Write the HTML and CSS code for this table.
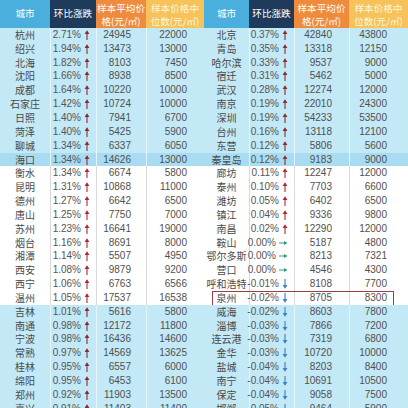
FILE: index.html
```html
<!DOCTYPE html>
<html lang="zh">
<head>
<meta charset="utf-8">
<link rel="stylesheet" href="styles.css">
</head>
<body>
<div class="page">
  <div class="tbl tl" id="left"></div>
  <div class="tbl tr" id="right"></div>
</div>
<script src="app.js"></script>
</body>
</html>
```
FILE: app.js
```js
var L = [
["杭州","2.71%","24945","22000"],["绍兴","1.94%","13473","13000"],["北海","1.82%","8103","7450"],
["沈阳","1.66%","8938","8500"],["成都","1.64%","10220","10000"],["石家庄","1.42%","10724","10000"],
["日照","1.40%","7941","6700"],["菏泽","1.40%","5425","5900"],["聊城","1.34%","6337","6050"],
["海口","1.34%","14626","13000"],["衡水","1.34%","6674","5800"],["昆明","1.31%","10868","11000"],
["德州","1.27%","6642","6500"],["唐山","1.25%","7750","7000"],["苏州","1.23%","16641","19000"],
["烟台","1.16%","8691","8000"],["湘潭","1.14%","5507","4950"],["西安","1.08%","9879","9200"],
["西宁","1.06%","6763","6566"],["温州","1.05%","17537","16538"],["吉林","1.01%","5616","5800"],
["南通","0.98%","12172","11800"],["宁波","0.98%","16436","14600"],["常熟","0.97%","14569","13625"],
["桂林","0.95%","6557","6000"],["绵阳","0.95%","6453","6100"],["郑州","0.92%","11903","13500"],
["嘉兴","0.91%","11403","11400"]];
var R = [
["北京","0.37%","42840","43800"],["青岛","0.35%","13318","12150"],["哈尔滨","0.33%","9537","9000"],
["宿迁","0.31%","5462","5000"],["武汉","0.28%","12274","12000"],["南京","0.19%","22010","24300"],
["深圳","0.19%","54233","53500"],["台州","0.16%","13118","12100"],["东营","0.12%","5806","5600"],
["秦皇岛","0.12%","9183","9000"],["廊坊","0.11%","12247","12000"],["泰州","0.10%","7703","6600"],
["潍坊","0.05%","6402","6500"],["镇江","0.04%","9336","9800"],["南昌","0.02%","12290","12000"],
["鞍山","0.00%","5187","4800"],["鄂尔多斯","0.00%","8213","7321"],["营口","0.00%","4546","4300"],
["呼和浩特","-0.01%","8108","7700"],["泉州","-0.02%","8705","8300"],["威海","-0.02%","8603","7800"],
["淄博","-0.03%","7866","7200"],["连云港","-0.03%","7319","6800"],["金华","-0.03%","10720","10000"],
["盐城","-0.04%","8203","8400"],["南宁","-0.04%","10691","10500"],["保定","-0.04%","9058","7500"],
["邯郸","-0.05%","9464","5900"]];

var UP = '<svg class="ar up" viewBox="0 0 6 10" width="6" height="10"><path d="M3 10V2.5" stroke="currentColor" stroke-width="1.1"/><path d="M0.6 4L3 0.3L5.4 4Z" fill="currentColor"/></svg>';
var DN = '<svg class="ar dn" viewBox="0 0 6 10" width="6" height="10"><path d="M3 0V7.5" stroke="currentColor" stroke-width="1.1"/><path d="M0.6 6L3 9.7L5.4 6Z" fill="currentColor"/></svg>';
var EQ = '<svg class="ar eq" viewBox="0 0 9 6" width="9" height="6"><path d="M0 3H6" stroke="currentColor" stroke-width="1"/><path d="M5 1L8.6 3L5 5Z" fill="currentColor"/></svg>';

function build(el, data, marked) {
  var h = '<div class="row head"><div class="c h1">城市</div><div class="c h2">环比涨跌</div>' +
    '<div class="c h3"><span class="hx"><span class="ln">样本平均价</span><span class="ln">格(元/㎡)</span></span></div>' +
    '<div class="c h4"><span class="hx"><span class="ln">样本价格中</span><span class="ln">位数(元/㎡)</span></span></div></div>';
  data.forEach(function (r, i) {
    var band = (i < 10 || i >= 20) ? 'blue' : 'white';
    if (i === 9) band += ' hl';
    if (r[0] === marked) band += ' mark';
    var v = parseFloat(r[1]);
    var ic = v > 0 ? UP : (v < 0 ? DN : EQ);
    h += '<div class="row ' + band + '"><div class="c city">' + r[0] + '</div>' +
      '<div class="c pct"><span>' + r[1] + '</span>' + ic + '</div>' +
      '<div class="c n1">' + r[2] + '</div><div class="c n2">' + r[3] + '</div></div>';
  });
  el.innerHTML = h;
}
build(document.getElementById('left'), L, null);
build(document.getElementById('right'), R, '泉州');
```
FILE: styles.css
```css
html, body {
  margin: 0;
  padding: 0;
  background: #ffffff;
}
body {
  width: 408px;
  height: 408px;
  overflow: hidden;
  font-family: "Liberation Sans", "Noto Sans CJK SC", sans-serif;
  font-size: 10px;
  color: #4a4a4a;
}
.page {
  display: flex;
  width: 408px;
}
.tbl {
  display: flex;
  flex-direction: column;
}
.tl { width: 204px; }
.tr { width: 204px; }
.row {
  display: grid;
  height: 13.85px;
  position: relative;
}
.tl .row { grid-template-columns: 50px 46px 50px 58px; }
.tr .row { grid-template-columns: 45px 45px 55px 59px; }
.row.head {
  height: 28px;
}
.c {
  display: flex;
  align-items: center;
  white-space: nowrap;
  line-height: 1;
}
.head .c {
  justify-content: center;
  text-align: center;
  color: #ffffff;
  font-family: "Noto Sans CJK SC", sans-serif;
  font-size: 9.6px;
  line-height: 1;
}
.hx {
  display: flex;
  flex-direction: column;
  align-items: center;
  gap: 3px;
}
.ln {
  display: block;
  line-height: 10px;
  height: 10px;
}
.h1 { background: #4aafdc; }
.h2 { background: #1f3b5b; }
.h3 { background: #ee8b3c; }
.h4 { background: #f5c35a; color: #fff6de !important; }

.city {
  justify-content: center;
  font-family: "Noto Sans CJK SC", sans-serif;
  font-size: 10px;
  color: #4a4a4a;
}
.pct {
  justify-content: flex-end;
  padding-right: 6px;
  gap: 3px;
  color: #555555;
}
.n1, .n2 {
  justify-content: flex-end;
  color: #505050;
}
.tl .n1 { padding-right: 15px; }
.tl .n2 { padding-right: 17px; }
.tr .n1 { padding-right: 17px; }
.tr .n2 { padding-right: 21px; }

.blue { background: #c3e8f6; }
.blue.hl { background: #a9dcf1; }
.white { background: #ffffff; }

.blue .c + .c { border-left: 1px solid #e4f5fc; }
.white .c + .c { border-left: 1px solid #d9d9d9; }

.ar { flex: none; }
.up { color: #b3262e; }
.blue .up { color: #8a2a30; }
.dn { color: #3c7fc4; }
.eq { color: #2f9a86; }

.mark::after {
  content: "";
  position: absolute;
  left: 8px;
  right: 14px;
  top: 0;
  bottom: -1px;
  border: 1px solid #9c3c48;
  pointer-events: none;
}
```
